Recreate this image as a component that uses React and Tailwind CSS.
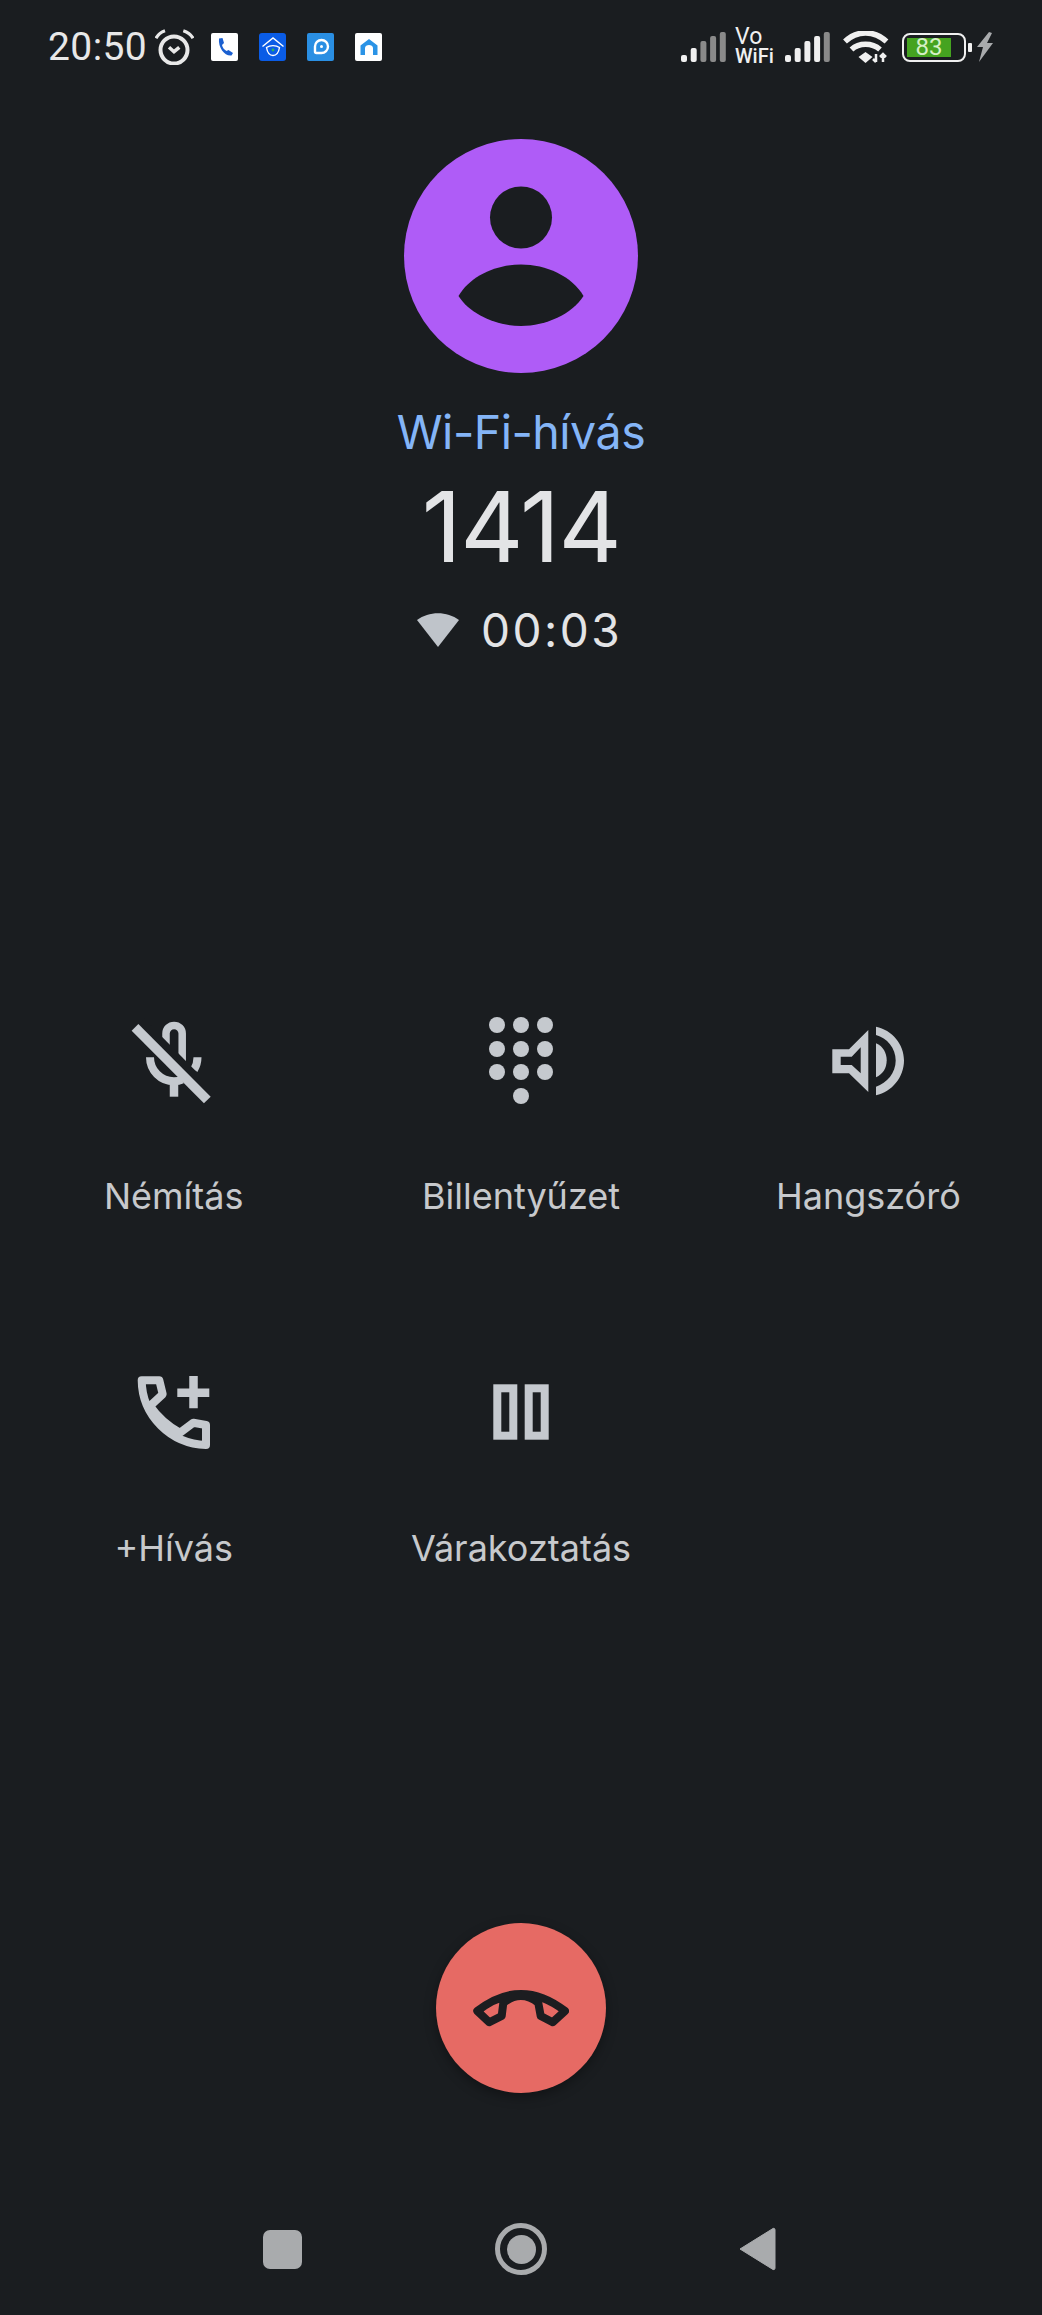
import React from "react";

const IC = "#c5c9ce";
const BG = "#1a1d20";

function Signal({ colors }) {
  return (
    <svg width="46" height="30" viewBox="0 0 46 30" className="block">
      {[7, 14, 21, 26, 30].map((h, i) => (
        <rect key={i} x={i * 9.7} y={30 - h} width="6" height={h} rx="2" fill={colors[i]} />
      ))}
    </svg>
  );
}

function Alarm() {
  return (
    <svg width="39" height="36" viewBox="0 0 39 36" fill="none" stroke="#e8e8e8" className="block">
      <circle cx="19" cy="21" r="13.5" strokeWidth="4" />
      <path d="M14 18.3 19 22.7 24.3 18.3" strokeWidth="3.5" />
      <path d="M1 9.3C3 5.5 6 3 10 1.7M28.3 1.7C32.5 3 36 5.5 38 9.3" strokeWidth="3.2" />
    </svg>
  );
}

function TilePhone() {
  return (
    <div className="w-[27px] h-[28px] rounded-[2px] bg-white flex items-center justify-center">
      <svg width="20" height="20" viewBox="0 0 20 20">
        <path d="M4 1.5 7.5 1 9 6 7 8C7.5 10.5 9 12.5 11.5 14L13.5 13 18 16 16.5 18.5C10 19.5 3 11 4 1.5Z" fill="#1a5fd0" />
      </svg>
    </div>
  );
}
function TileHome() {
  return (
    <div className="w-[27px] h-[28px] rounded-[3px] bg-[#0a5ce6] flex items-center justify-center">
      <svg width="24" height="24" viewBox="0 0 24 24" fill="none" stroke="#fff" strokeWidth="1.4">
        <path d="M1.5 11.5 12 3l10.5 8.5M5.5 12.5c1 6 4 8 6.5 8s5.5-2 6.5-8C15 10 9 10 5.5 12.5Z" />
        <circle cx="12" cy="15" r="1.4" fill="#2fb45a" stroke="none" />
      </svg>
    </div>
  );
}
function TileChat() {
  return (
    <div className="w-[27px] h-[28px] rounded-[2px] bg-[#2a8fe3] flex items-center justify-center">
      <svg width="20" height="20" viewBox="0 0 20 20" fill="none" stroke="#fff" strokeWidth="2.4">
        <path d="M4 9.5a6.5 6.5 0 1 1 6.5 6.5H5.5C4.5 16 4 15.5 4 14.5Z" />
        <circle cx="10.500" cy="9.500" r="1.500" fill="#fff" stroke="none" />
      </svg>
    </div>
  );
}
function TileHouse() {
  return (
    <div className="w-[27px] h-[28px] rounded-[2px] bg-white flex items-center justify-center">
      <svg width="20" height="20" viewBox="0 0 20 20">
        <path d="M1.5 18V8.5L10 2l8.500 6.500V18H14V11C14 9 12 8 10 8S6 9 6 11V18Z" fill="#2a93e6" />
      </svg>
    </div>
  );
}

function Wifi() {
  return (
    <svg width="46" height="32" viewBox="0 0 46 32" fill="none" stroke="#f0f0f0" className="block">
      <path d="M2 10.500C14 -1 31 -1 43.500 10.500" strokeWidth="5.500" />
      <path d="M8.500 18.500C16 11.500 29 11.500 37 18.500" strokeWidth="5.500" />
      <path d="M15.500 26 22.500 21 29.500 26 22.500 32Z" fill="#f0f0f0" stroke="none" />
      <path d="M33 23V31M30 28l3 3M40 31V23M37 26l3-3 3 3" strokeWidth="2.500" />
    </svg>
  );
}

function MicOff() {
  return (
    <svg width="96" height="96" viewBox="0 0 96 96" fill="none" className="block">
      <path d="M40 34V21.500a8.100 8.100 0 0 1 16.200 0V50" stroke={IC} strokeWidth="7.500" />
      <path d="M24 45.300c0 13 10.500 24 24 24 3 0 6-.6 8-1.600" stroke={IC} strokeWidth="8" />
      <path d="M48 66V84.700" stroke={IC} strokeWidth="8.500" />
      <path d="M71.500 45.300c0 4.500-1 8.500-3.500 12.500" stroke={IC} strokeWidth="8" />
      <path d="M15 10 87 83" stroke={BG} strokeWidth="9" />
      <path d="M9 15.300 81.300 88" stroke={IC} strokeWidth="9.500" />
    </svg>
  );
}

function Keypad() {
  const dots = [];
  [[24, 13], [48, 13], [72, 13], [24, 37], [48, 37], [72, 37], [24, 60], [48, 60], [72, 60], [48, 84]].forEach(([x, y], i) =>
    dots.push(<circle key={i} cx={x} cy={y} r="8" fill={IC} />)
  );
  return (
    <svg width="96" height="96" viewBox="0 0 96 96" className="block">
      {dots}
    </svg>
  );
}

function Speaker() {
  return (
    <svg width="96" height="96" viewBox="0 0 96 96" className="block" fill={IC}>
      <path
        fillRule="evenodd"
        d="M12.300 37.300H29L48.300 18V80L29 61.300H12.300ZM20.700 44.700V53H31.700L40.700 61.300V35.300L31.700 44.700Z"
      />
      <path d="M56 31.300C63 34 66.700 41 66.700 48.300C66.700 56 63 62 56 65.300Z" />
      <path d="M56 14.700C72 18 84 32 84 48.500C84 65 72 80 56 83.300V74.700C67 71 75.700 61 75.700 48.500C75.700 36 67 26 56 23Z" />
    </svg>
  );
}

function PhoneAdd() {
  return (
    <svg width="96" height="96" viewBox="0 0 96 96" className="block" fill="none">
      <path
        d="M15.700 16.300H33.300L36.700 30.300 24 42Q36 59 54 68.700L67.300 58.700 80 61V81C45 80 16 52 15.700 16.300Z"
        stroke={IC}
        strokeWidth="8"
        strokeLinejoin="round"
      />
      <path d="M51.300 28.700H83.300M67.500 12V44.300" stroke={IC} strokeWidth="8.500" />
    </svg>
  );
}

function Pause() {
  return (
    <svg width="96" height="96" viewBox="0 0 96 96" className="block" fill="none" stroke={IC} strokeWidth="8">
      <rect x="24.300" y="24.300" width="16" height="47.400" />
      <rect x="55.700" y="24.300" width="16" height="47.400" />
    </svg>
  );
}

function EndCall() {
  return (
    <svg width="96" height="96" viewBox="0 0 96 96" className="block" fill="none">
      <path
        d="M4.300 51 16.300 62.300 28.700 56 30.300 43Q48 29 65.300 43L67.700 56 79.700 62.300 92 51Q48 17 4.300 51Z"
        stroke="#1c1d20"
        strokeWidth="8"
        strokeLinejoin="round"
      />
    </svg>
  );
}

function Action({ icon, label }) {
  return (
    <div className="h-[352px] flex flex-col items-center">
      {icon}
      <div className="mt-[66px] text-[36px] leading-[44px] text-[#c7c9cc]">{label}</div>
    </div>
  );
}

export default function App() {
  return (
    <div className="w-[1042px] h-[2315px] bg-[#1a1d20] flex flex-col items-stretch overflow-hidden font-['Inter',sans-serif]">
      {/* status bar */}
      <div className="h-[94px] flex items-center justify-between pl-[48px] pr-[48px]">
        <div className="flex items-center">
          <span className="font-['Roboto',sans-serif] text-[39px] leading-[44px] tracking-[0.4px] text-[#e8e8e8]">20:50</span>
          <div className="ml-[8px] mr-[17px]">
            <Alarm />
          </div>
          <div className="flex items-center gap-[21px]">
            <TilePhone />
            <TileHome />
            <TileChat />
            <TileHouse />
          </div>
        </div>
        <div className="flex items-center">
          <Signal colors={["#f0f0f0", "#f0f0f0", "#8a8a8a", "#8a8a8a", "#8a8a8a"]} />
          <div className="ml-[8px] w-[42px] flex flex-col items-start font-['Roboto',sans-serif] text-[#f0f0f0]">
            <span className="text-[23px] leading-[18px]">Vo</span>
            <span className="text-[20px] leading-[20px] font-medium">WiFi</span>
          </div>
          <div className="ml-[8px]">
            <Signal colors={["#f0f0f0", "#f0f0f0", "#f0f0f0", "#f0f0f0", "#8a8a8a"]} />
          </div>
          <div className="ml-[12px]">
            <Wifi />
          </div>
          <div className="ml-[13px] flex items-center">
            <div className="w-[64px] h-[29px] rounded-[8px] border-[2.5px] border-[#f0f0f0] p-[3px] pr-[13px]">
              <div className="h-full bg-[#45a320] flex items-center justify-center font-['Roboto',sans-serif] text-[24px] leading-none text-[#d5f0c5]">
                83
              </div>
            </div>
            <div className="ml-[2px] w-[4px] h-[9px] rounded-[1px] bg-[#f0f0f0]" />
          </div>
          <svg width="18" height="30" viewBox="0 0 18 30" className="ml-[4px] block">
            <path d="M13 0 1 15H7L3 30 17 11H11L16 1Z" fill="#a9abad" />
          </svg>
        </div>
      </div>

      {/* caller */}
      <div className="flex flex-col items-center">
        <div className="mt-[45px] w-[234px] h-[234px] rounded-full bg-[#af5cf7] flex items-center justify-center">
          <svg width="234" height="234" viewBox="0 0 234 234" className="block">
            <circle cx="117" cy="78.500" r="31" fill={BG} />
            <path d="M54.500 157C66 137 92 125.500 117 125.500C142 125.500 168 137 179.500 157C168 175 142 187 117 187C92 187 66 175 54.500 157Z" fill={BG} />
          </svg>
        </div>
        <div className="mt-[29px] text-[46.5px] leading-[60px] text-[#84b5f7] tracking-[-0.5px]">Wi-Fi-hívás</div>
        <div className="mt-[10px] text-[98px] leading-[110px] text-[#e3e4e6] tracking-[-1.5px]">1414</div>
        <div className="mt-[18px] mr-[4px] flex items-center">
          <svg width="44" height="36" viewBox="0 0 44 36" className="block">
            <path d="M1 8C13 -1 31 -1 43 8L22 35Z" fill="#bfc4ca" />
          </svg>
          <span className="ml-[21px] text-[46px] leading-[60px] text-[#e3e4e6] tracking-[2.500px]">00:03</span>
        </div>
      </div>

      {/* actions */}
      <div className="mt-[352px] grid grid-cols-3">
        <Action icon={<MicOff />} label="Némítás" />
        <Action icon={<Keypad />} label="Billentyűzet" />
        <Action icon={<Speaker />} label="Hangszóró" />
        <Action icon={<PhoneAdd />} label="+Hívás" />
        <Action icon={<Pause />} label="Várakoztatás" />
      </div>

      {/* end call */}
      <div className="mt-[207px] flex justify-center">
        <div className="w-[170px] h-[170px] rounded-full bg-[#e66a64] flex items-center justify-center shadow-[0_4px_12px_rgba(0,0,0,0.35)]">
          <EndCall />
        </div>
      </div>

      {/* nav */}
      <div className="mt-[129px] h-[54px] flex items-center pl-[263px]">
        <div className="w-[39px] h-[39px] rounded-[7px] bg-[#a9abad]" />
        <div className="ml-[193px] w-[52px] h-[52px] rounded-full border-[5px] border-[#a9abad] flex items-center justify-center">
          <div className="w-[29px] h-[29px] rounded-full bg-[#a9abad]" />
        </div>
        <svg width="38" height="46" viewBox="0 0 38 46" className="ml-[191px] block">
          <path d="M35 2.500 2 23 35 43.500C36.500 44 37 43 37 42V4C37 2.500 36 2 35 2.500Z" fill="#a9abad" stroke="#a9abad" strokeWidth="1" strokeLinejoin="round" />
        </svg>
      </div>
    </div>
  );
}
